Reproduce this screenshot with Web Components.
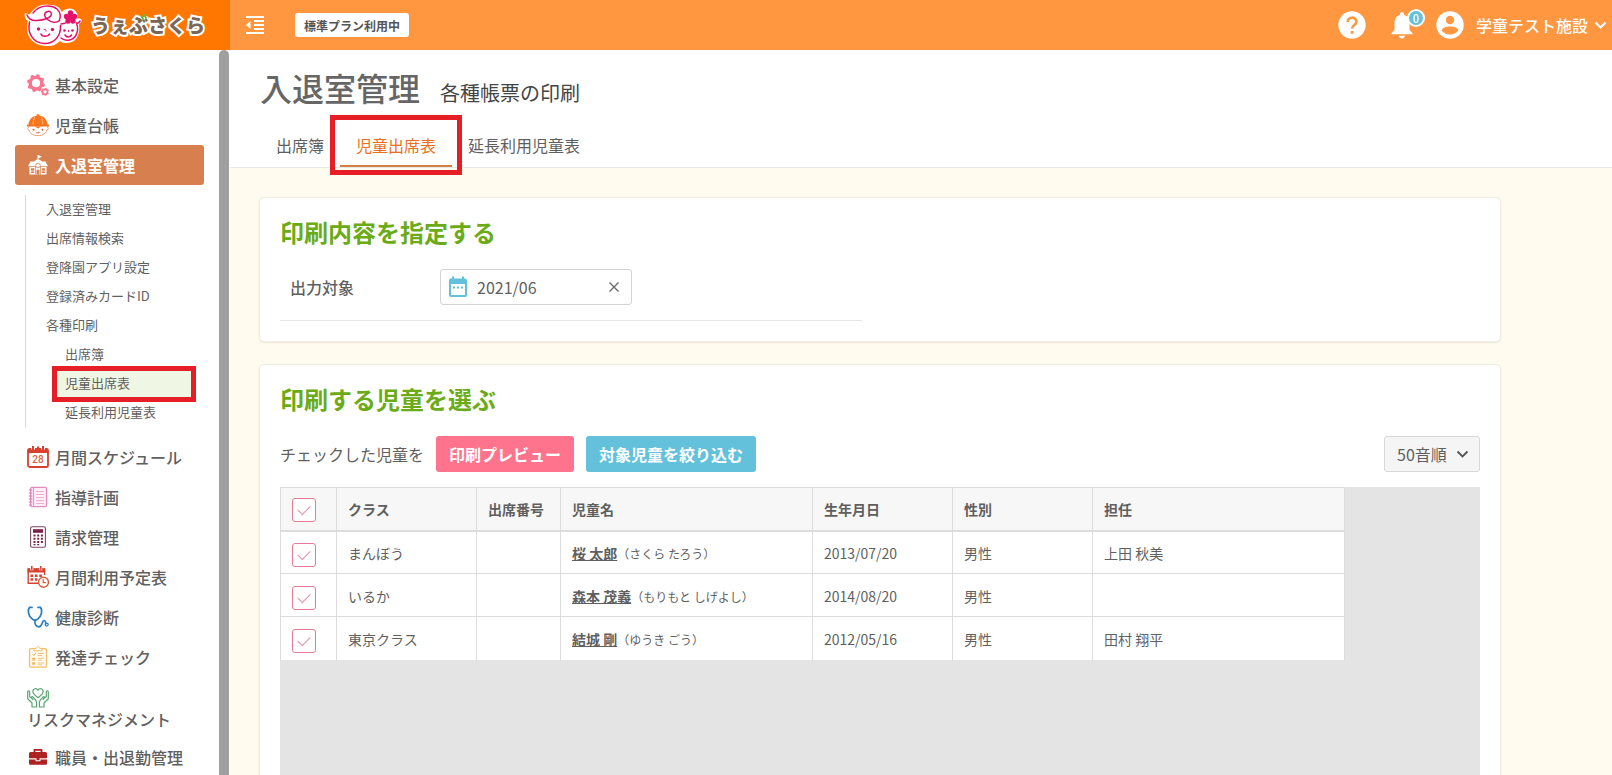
<!DOCTYPE html>
<html lang="ja">
<head>
<meta charset="utf-8">
<title>入退室管理 | うぇぶさくら</title>
<style>
  html, body { margin: 0; height: 100%; }
  body { font: 16px/24px "Noto Sans CJK JP", "Noto Sans", sans-serif; color: #5f5f5f; background: #fffbee; overflow: hidden; }
</style>
</head>
<body>
<app-shell>
  <app-header slot="header" plan="標準プラン利用中" facility="学童テスト施設" notices="0"></app-header>
  <side-menu slot="side">
    <menu-item icon="gears">基本設定</menu-item>
    <menu-item icon="child">児童台帳</menu-item>
    <menu-item icon="school" active>入退室管理</menu-item>
    <sub-menu>
      <sub-item>入退室管理</sub-item>
      <sub-item>出席情報検索</sub-item>
      <sub-item>登降園アプリ設定</sub-item>
      <sub-item>登録済みカードID</sub-item>
      <sub-item>各種印刷</sub-item>
      <sub-item nested>出席簿</sub-item>
      <sub-item nested active>児童出席表</sub-item>
      <sub-item nested>延長利用児童表</sub-item>
    </sub-menu>
    <menu-item icon="calendar">月間スケジュール</menu-item>
    <menu-item icon="notebook">指導計画</menu-item>
    <menu-item icon="calculator">請求管理</menu-item>
    <menu-item icon="calclock">月間利用予定表</menu-item>
    <menu-item icon="stethoscope">健康診断</menu-item>
    <menu-item icon="clipboard">発達チェック</menu-item>
    <menu-item icon="hands" stacked>リスクマネジメント</menu-item>
    <menu-item icon="briefcase">職員・出退勤管理</menu-item>
  </side-menu>
  <page-heading heading="入退室管理" sub="各種帳票の印刷">
    <tab-link>出席簿</tab-link>
    <tab-link active>児童出席表</tab-link>
    <tab-link>延長利用児童表</tab-link>
  </page-heading>
  <page-card heading="印刷内容を指定する">
    <month-field label="出力対象" value="2021/06"></month-field>
  </page-card>
  <page-card heading="印刷する児童を選ぶ">
    <print-toolbar></print-toolbar>
    <roster-table></roster-table>
  </page-card>
</app-shell>

<script>
const define = (name, render) => customElements.define(name, class extends HTMLElement {
  constructor() { super(); this.attachShadow({ mode: 'open' }); }
  connectedCallback() {
    this.shadowRoot.innerHTML = '<style>*{box-sizing:border-box}a{color:inherit;text-decoration:none}</style>' + render(this);
  }
});

const gear = (cx, cy, r, w, teeth, tooth) => {
  let out = `<circle cx="${cx}" cy="${cy}" r="${r}" fill="none" stroke="#fb7590" stroke-width="${w}"/>`;
  for (let i = 0; i < teeth; i++)
    out += `<circle cx="${cx}" cy="${cy - r - w * .4}" r="${tooth}" fill="#fb7590" transform="rotate(${i * 360 / teeth + 15} ${cx} ${cy})"/>`;
  return out;
};

const ICONS = {
  gears: gear(9, 9.2, 5.8, 3.4, 8, 1.9) + gear(18, 17.8, 2.5, 1.700, 7, .9),
  child: `<path d="M1.400 11.500C1.400 5.600 5.600 1.600 11 1.600s9.600 4 9.600 9.900z" fill="#f9771c"/><path d="M11 .2v2" stroke="#f9771c" stroke-width="2.400"/><path d="M7.800 2.800C6.500 5.500 6.200 8 6.200 10.600M14.200 2.800c1.300 2.700 1.600 5.200 1.600 7.800" stroke="#fcb98a" fill="none"/><path d="M2.200 12.800c-1.800 0-2 3 0 3.400.8 3.300 4.300 5.400 8.800 5.400s8-2.100 8.800-5.400c2-.4 1.800-3.400 0-3.400" fill="#fff" stroke="#e99360" stroke-width=".9"/><path d="M0 10.600h22v1.900H0z" fill="#f0731a"/><path d="M8 12.400h6L11 14.600z" fill="#f0731a"/><circle cx="6.500" cy="15.700" r="1" fill="#c96a35"/><circle cx="15.500" cy="15.700" r="1" fill="#c96a35"/><path d="M8.300 18.300c1.400 1.500 4 1.500 5.400 0z" fill="#e0662a"/>`,
  school: `<g fill="#fff"><path d="M10.500 1h1v5h-1zM11.500 1.200l3.500 1.500-3.500 1.500zM11 4.800l5 3.200H6zM3.500 7.500h15l2.500 4.700H1z"/><path d="M2.500 13h17v7.500h-17z"/></g><path d="M4 14.300h3.300v4.700H4zM14.800 14.300H18v4.700h-3.200zM9.500 15.800h3v4.700h-3zM8 12.500h.7v8H8zM13.300 12.500h.7v8h-.7z" fill="#d87f4f"/><path d="M4 17h3.300M14.800 17H18" stroke="#fff" stroke-width=".8"/><circle cx="11" cy="11.500" r="2.300" fill="#fff" stroke="#d87f4f" stroke-width=".8"/>`,
  calendar: `<rect x="1" y="3" width="20" height="18" rx="1.800" fill="#fff" stroke="#d9412f" stroke-width="1.800"/><path d="M1 2.600h20V7H1z" fill="#d9412f"/><path d="M6 0v3.600M16 0v3.600" stroke="#fff" stroke-width="4"/><path d="M6 0v4M11 .5v2M16 0v4" stroke="#d9412f" stroke-width="2"/><text x="11" y="17.400" font-size="10" font-weight="500" text-anchor="middle" fill="#d9603f" font-family="Roboto, sans-serif">28</text>`,
  notebook: `<rect x="3.600" y="1.300" width="16" height="19.400" rx="1.500" fill="#fdeef7" stroke="#e58cbe" stroke-width="1.300"/><path d="M6.600 1.500v19" stroke="#e58cbe"/><path d="M1.800 4h3.500M1.800 7h3.500M1.800 10h3.500M1.800 13h3.500M1.800 16h3.500M1.800 19h3" stroke="#dd74b0" stroke-width="1.200"/><path d="M9 5.500h8M9 8.500h8M9 11.500h8M9 14.500h8M9 17.500h8" stroke="#e9a9cf" stroke-width=".9"/>`,
  calculator: `<rect x="3.600" y=".8" width="14.800" height="20.400" rx="1.500" fill="#fff" stroke="#7b4a63" stroke-width="1.100"/><path d="M6 3.200h10v3.600H6z" fill="#7a2048"/><path d="M6.500 9.600h9.500M6.500 12.800h9.500M6.500 16h9.500" stroke="#7a2048" stroke-width="2" stroke-dasharray="2 1.700"/><path d="M6.500 18.600h5.800" stroke="#7a2048" stroke-width="1.300" stroke-dasharray="2 1.700"/>`,
  calclock: `<path d="M12 17.300H1.200V3H17.500v6" fill="none" stroke="#d9412f" stroke-width="1.400"/><path d="M.5 2.500h17.700v4H.5z" fill="#d9412f"/><path d="M4.800 0v4.200M13.700 0v4.200" stroke="#fff" stroke-width="3"/><path d="M4.800 0v3.800M13.700 0v3.800" stroke="#d9412f" stroke-width="1.600"/><path d="M3.500 9.800H15.500M3.500 13.500h7.500" stroke="#d9412f" stroke-width="2.600" stroke-dasharray="2.600 1.800"/><circle cx="16.500" cy="16.300" r="5" fill="#fff" stroke="#d9603f" stroke-width="1.500"/><path d="M16.200 13v3.600h3" stroke="#d9603f" fill="none" stroke-width="1.200"/>`,
  stethoscope: `<g fill="none" stroke="#2a7fc0" stroke-width="1.700" stroke-linecap="round"><path d="M5 1.400H2.600C.3 4 1.200 10.500 5.500 13.300c1.600 1 3.400 1 5 0C14.800 10.500 15.700 4 13.400 1.400H11"/><path d="M8 14.300c-.5 3.500.8 6.500 3.700 6.500 4.300 0 2.700-6.300 5.600-6.300 1.700 0 1 2.300 1.600 3.200"/><circle cx="19.700" cy="18.600" r="1.500" stroke-width="1.300"/></g>`,
  clipboard: `<rect x="2.500" y="2.600" width="17" height="18.600" rx="1.300" fill="#fffaf0" stroke="#f0c06c" stroke-width="1.300"/><path d="M7 4.700V2.300h2.300c.5-2.200 3-2.200 3.400 0H15v2.400z" fill="#fff" stroke="#f0c06c"/><path d="M5.500 8.200l1.300 1.300 2-2.700" fill="none" stroke="#e9ae4e"/><path d="M10.800 7.500H17M10.800 9.500H15M10.800 12.300H17M10.800 14.200H15M10.800 17H17M10.800 18.800H15" stroke="#ecbd74" stroke-width=".9"/><path d="M5.200 11.800h3v2.600h-3zM5.200 16.200h3v2.600h-3z" fill="#f0b957"/>`,
  hands: `<g fill="none" stroke="#59a273" stroke-width="1.200" stroke-linejoin="round" transform="translate(0 1)"><path d="M11 10.700C7.600 8.300 5.800 6.400 5.800 4.300c0-2.900 3.800-3.600 5.200-1 1.400-2.600 5.200-1.900 5.200 1 0 2.100-1.800 4-5.200 6.400z"/><path d="M.7 4.200v7.600L5 16v4h4.600v-4.500c0-2-1.200-3.300-3.700-5.500-1-.8-2 .2-1.200 1.200l1.500 1.800M.7 4.200c1.200-.8 2 0 2 1v4.600l2 1.400M21.300 4.200v7.600L17 16v4h-4.600v-4.500c0-2 1.200-3.300 3.700-5.500 1-.8 2 .2 1.200 1.200l-1.500 1.800M21.300 4.200c-1.200-.8-2 0-2 1v4.600l-2 1.400"/></g>`,
  briefcase: `<path d="M7.500 6V3.800h7V6" fill="none" stroke="#ad2222" stroke-width="1.800"/><path d="M3.500 6h15a1.500 1.500 0 0 1 1.500 1.500v4.700H2V7.500A1.500 1.500 0 0 1 3.500 6zM2 13.500h6.500v1.800h5v-1.800H20v4a1.200 1.200 0 0 1-1.200 1.200H3.200A1.200 1.200 0 0 1 2 17.500zM9.500 12h3v2.300h-3z" fill="#ad2222"/>`
};

define('app-icon', el => `
  <style>:host{display:block;width:22px;height:22px;flex:none}svg{display:block;width:100%;height:100%;overflow:visible}</style>
  <svg viewBox="0 0 22 22" aria-hidden="true">${ICONS[el.getAttribute('name')]}</svg>`);

define('app-shell', () => `
  <style>
    :host{display:grid;grid-template:50px minmax(0,1fr) / 230px minmax(0,1fr);height:100vh}
    slot[name=header]{display:block;grid-column:1/-1}
    main{overflow-y:auto;scrollbar-width:none;display:flex;flex-direction:column;gap:22px}
    ::slotted(page-card){margin:0 29px;max-width:1242px}
  </style>
  <slot name="header"></slot><slot name="side"></slot><main><slot></slot></main>`);

define('brand-logo', () => `
  <style>
    :host{display:block;width:230px}
    a{display:flex;align-items:center;height:50px;padding-left:24px;gap:9px}
    svg{display:block;flex:none}
    .name{position:relative;font-size:19px;font-weight:900;line-height:28px;color:#7a6757;-webkit-text-stroke:4px #fff;paint-order:stroke fill}
    .name svg{position:absolute;left:49px;top:3px}
  </style>
  <a href="#" aria-label="うぇぶさくら">
    <svg width="58" height="42" viewBox="0 0 58 42">
      <path d="M1 9c2 0 3 2 5 1C11 2 19-1 27 1c6 0 9 3 11 7 3-4 11-5 14 0 2 2 2 5 1 7 3-1 4 0 5 1-1 3-2 3-3 4 1 9-1 18-12 19-3 0-5 0-7-2-4 4-9 6-15 5C10 41 3 34 3 24c0-3 0-5 1-7C1 15 0 12 1 9z" fill="#fff"/>
      <g fill="none" stroke="#e5106a" stroke-width="1.500" stroke-linecap="round" stroke-linejoin="round">
        <path d="M3 11c2 5 6 6 10 5.500 6-.5 12-2 14-5 1.500-2.500-1-5-4-3.800-3.500 1.600-3 5.200.5 7.800 4 3 9 4 12 1"/>
        <path d="M9 9C15 1 27 0 33 5c3.500 3 4 8 2.500 11"/>
        <path d="M5.500 18C3 29 9 39 20 39.500c10 .5 17-7 16.500-18"/>
        <path d="M37 34c4 3.500 11 3 14.500-2 2.500-4 2.500-9 1-13M37 20c3-.3 6-1.500 8-3M52.500 19c1.500.5 3-.5 3.500-2"/>
        <path d="M17 30c1 3 7 3 8.500 0M41 31c1.500 2.500 5 2.500 6.500 0"/>
        <path d="M20 25.500c1.500-.5 2 0 2 1.500M44.500 26.500v1" stroke-width="1"/>
      </g>
      <g fill="#e5106a"><circle cx="14.500" cy="25" r="1.700"/><circle cx="28.500" cy="25.500" r="1.700"/><circle cx="40.500" cy="26.500" r="1.300"/><circle cx="48.500" cy="26.500" r="1.300"/>
        <circle cx="46.500" cy="9" r="2.700"/><circle cx="50.500" cy="12.500" r="2.700"/><circle cx="49" cy="17" r="2.700"/><circle cx="44" cy="17" r="2.700"/><circle cx="42.500" cy="12.500" r="2.700"/><circle cx="46.500" cy="13.500" r="3"/></g>
    </svg>
    <span class="name">うぇぶさくら<svg width="7" height="7" viewBox="0 0 7 7"><path d="M1.500 2l1.500 3M4.500 1L6 4" stroke="#6cb52d" stroke-width="1.800" stroke-linecap="round"/></svg></span>
  </a>`);

define('app-header', el => `
  <style>
    :host{display:flex;align-items:center;height:50px;background:#ff9640;color:#fff}
    brand-logo{background:#ff7600;height:50px}
    button{border:0;padding:0;background:none;color:inherit;font:inherit;display:flex;align-items:center;cursor:pointer}
    svg{display:block}
    .fold{margin-left:16px}
    .plan{margin-left:31px;padding:1px 9px 0;border-radius:3px;background:#fff;color:#555;font-size:12px;font-weight:700;line-height:23px}
    .right{margin-left:auto;display:flex;align-items:center;padding-right:5px}
    .bell{position:relative;margin-left:23px}
    .count{position:absolute;left:18px;top:-2px;width:18px;height:18px;border-radius:9px;border:2px solid #fff;background:#64c1dc;font-size:11px;font-weight:500;line-height:14px;text-align:center}
    .user{margin-left:19px;font-weight:500}
    .user span{margin:0 6px 0 12px}
  </style>
  <brand-logo></brand-logo>
  <button class="fold" aria-label="メニューを閉じる"><svg width="18" height="18" viewBox="0 0 18 18" fill="#fff"><path d="M0 0h18v2H0zM8 4h10v2H8zM8 8h10v2H8zM8 12h10v2H8zM0 16h18v2H0zM0 9l4.500-4v8z"/></svg></button>
  <span class="plan">${el.getAttribute('plan')}</span>
  <div class="right">
    <button aria-label="ヘルプ"><svg width="28" height="28" viewBox="0 0 28 28"><circle cx="14" cy="14" r="13.700" fill="#fff"/><path d="M9.700 11c0-5.800 8.800-5.600 8.800-.4 0 3.400-4.400 3.600-4.400 7" fill="none" stroke="#ff9640" stroke-width="2.600"/><path d="M12.700 20h2.800v2.800h-2.800z" fill="#ff9640"/></svg></button>
    <button class="bell" aria-label="お知らせ"><svg width="26" height="28" viewBox="0 0 26 28" fill="#fff"><path d="M13 27.500c1.600 0 2.900-1.300 2.900-2.700h-5.800c0 1.400 1.300 2.700 2.900 2.700zM20.500 19v-6.800c0-4.200-2-7.300-5.500-8.100v-1a2 2 0 0 0-4 0v1c-3.500.8-5.500 3.900-5.500 8.100V19L2.500 22v1.300h21V22z"/></svg><span class="count">${el.getAttribute('notices')}</span></button>
    <button class="user"><svg width="30" height="28" viewBox="0 0 30 28"><circle cx="16" cy="14" r="13.700" fill="#fff"/><circle cx="16" cy="9" r="4.200" fill="#ff9640"/><path d="M7.800 19.500c.2-5.400 16.200-5.400 16.400 0-3.600 5.400-12.800 5.400-16.400 0z" fill="#ff9640"/></svg>
    <span>${el.getAttribute('facility')}</span><svg width="13" height="9" viewBox="0 0 13 9"><path d="M1.500 1.500l5 5 5-5" fill="none" stroke="#fff" stroke-width="2.200"/></svg></button>
  </div>`);

define('side-menu', () => `
  <style>
    :host{display:flex;height:100%;background:#fff;overflow:hidden}
    nav{flex:1;padding:15px 15px 0;overflow:hidden}
    .thumb{width:10px;margin-right:1px;border-radius:5px 5px 0 0;background:#a0a0a0}
  </style>
  <nav><slot></slot></nav><div class="thumb"></div>`);

define('menu-item', el => `
  <style>
    :host{display:block}
    a{display:flex;align-items:center;gap:6px;height:40px;padding-left:12px;font-weight:500;white-space:nowrap;border-radius:3px}
    :host([active]) a{background:#d87f4f;color:#fff;font-weight:700}
    :host([stacked]) a{flex-direction:column;align-items:flex-start;justify-content:flex-start;gap:0;height:60px;padding-top:9px;line-height:22px}
  </style>
  <a href="#"><app-icon name="${el.getAttribute('icon')}"></app-icon><span><slot></slot></span></a>`);

define('sub-menu', () => `
  <style>:host{display:block;margin:10px 0 10px 10px;border-left:1px solid #d8d8d8}</style><slot></slot>`);

define('sub-item', () => `
  <style>
    :host{display:block;position:relative;margin-left:20px;font-size:13px}
    a{display:block;padding-bottom:2px;line-height:27px;white-space:nowrap}
    :host([nested]){margin:0 13px 0 31px}
    :host([nested]) a{padding-left:8px}
    :host([active]) a{background:#eff6e4}
    :host([active])::after{content:"";position:absolute;inset:-3px -5px -4px;border:5px solid #e61e25;pointer-events:none}
  </style>
  <a href="#"><slot></slot></a>`);

define('page-heading', el => `
  <style>
    :host{display:block;flex:none;background:#fff;border-bottom:1px solid #e8e8e8;padding:13px 30px 0;margin-bottom:7px}
    header{display:flex;align-items:baseline;gap:20px}
    h1{margin:0;font-size:32px;font-weight:500;line-height:48px;color:#666}
    p{margin:0;font-size:20px;color:#444}
    nav{display:flex;margin-top:13px}
  </style>
  <header><h1>${el.getAttribute('heading')}</h1><p>${el.getAttribute('sub')}</p></header>
  <nav><slot></slot></nav>`);

define('tab-link', () => `
  <style>
    :host{display:block;position:relative}
    a{display:block;padding:9px 16px 8px;line-height:24px;border-bottom:2px solid transparent}
    :host([active]) a{color:#ea6f1c;border-color:#cf8042}
    :host([active])::after{content:"";position:absolute;inset:-9px -10px -8px;border:5px solid #e61e25;pointer-events:none}
  </style>
  <a href="#"><slot></slot></a>`);

define('page-card', el => `
  <style>
    :host{display:block;flex:none;box-sizing:border-box;padding:16px 20px 20px;background:#fff;border:1px solid #efece4;border-radius:5px;box-shadow:0 1px 2px rgba(0,0,0,.08)}
    h2{margin:0;font-size:24px;line-height:36px;color:#6aab17}
  </style>
  <h2>${el.getAttribute('heading')}</h2><slot></slot>`);

define('month-field', el => `
  <style>
    :host{display:flex;box-sizing:border-box;align-items:center;margin-top:19px;padding:0 10px 15px;border-bottom:1px solid #e6e6e6;width:calc(50% - 18px);min-width:400px}
    label{width:150px;font-weight:500}
    .box{display:flex;align-items:center;width:192px;height:36px;padding:0 9px 0 7px;border:1px solid #d4d4d4;border-radius:3px}
    svg{display:block;flex:none}
    input{flex:1;min-width:0;border:0;outline:0;padding:0 0 0 9px;font:inherit;color:inherit;background:none}
    button{border:0;background:none;padding:0;width:16px;height:16px}
  </style>
  <label for="month">${el.getAttribute('label')}</label>
  <div class="box">
    <svg width="20" height="22" viewBox="0 0 20 22"><path d="M2.800 2.500H4V.5h2v2h8v-2h2v2h1.200A1.800 1.800 0 0 1 19 4.300v14.900A1.800 1.800 0 0 1 17.200 21H2.800A1.800 1.800 0 0 1 1 19.200V4.300a1.800 1.800 0 0 1 1.800-1.800zM3 8v11h14V8z" fill="#64c1dc" fill-rule="evenodd"/><path d="M5 10.500h2v2H5zM9 10.500h2v2H9zM13 10.500h2v2h-2z" fill="#64c1dc"/></svg>
    <input id="month" type="text" value="${el.getAttribute('value')}">
    <button aria-label="クリア"><svg width="16" height="16" viewBox="0 0 16 16"><path d="M3.500 3.500l9 9M12.500 3.500l-9 9" stroke="#666" stroke-width="1.300"/></svg></button>
  </div>`);

define('print-toolbar', () => `
  <style>
    :host{display:flex;align-items:center;gap:12px;margin:19px 0 15px}
    button{height:36px;padding:0 13px;border:0;border-radius:3px;color:#fff;font:inherit;font-weight:700}
    .preview{background:#ff738c}
    .filter{background:#64c1dc}
    .order{display:grid;align-items:center;margin-left:auto}
    select,.order svg{grid-area:1/1}
    select{appearance:none;width:96px;height:36px;margin:0;padding:0 12px;border:1px solid #d8d8d8;border-radius:3px;background:#f5f5f5;color:inherit;font:inherit}
    svg{justify-self:end;margin-right:11px;pointer-events:none}
  </style>
  <span>チェックした児童を</span>
  <button class="preview">印刷プレビュー</button>
  <button class="filter">対象児童を絞り込む</button>
  <div class="order"><select aria-label="並び順"><option>50音順</option></select>
  <svg width="13" height="9" viewBox="0 0 13 9"><path d="M1.500 1.500l5 5 5-5" fill="none" stroke="#555" stroke-width="1.800"/></svg></div>`);

const ROWS = [
  ['まんぼう', '', '桜 太郎', 'さくら たろう', '2013/07/20', '男性', '上田 秋美'],
  ['いるか', '', '森本 茂義', 'もりもと しげよし', '2014/08/20', '男性', ''],
  ['東京クラス', '', '結城 剛', 'ゆうき ごう', '2012/05/16', '男性', '田村 翔平']
];

define('roster-table', () => `
  <style>
    :host{display:block;min-height:440px;background:#e4e4e4}
    table{border-collapse:collapse;table-layout:fixed;width:1065px;background:#fff;font-size:14px;line-height:20px}
    th,td{height:43px;padding:0 11px;border:1px solid #dcdcdc;text-align:left;white-space:nowrap}
    td{padding-top:2px}
    th{background:#f7f7f7;border-bottom-width:2px}
    tbody tr:last-child td{border-bottom:0}
    .check{width:56px}.m{width:140px}.s{width:84px}.l{width:252px}
    td a{font-weight:700;text-decoration:underline}
    small{font-size:12px}
    input{appearance:none;display:grid;place-items:center;width:24px;height:24px;margin:3px 0 0;border:1px solid #e57c97;border-radius:3px;background:#fff}
    input:checked::before{content:"";width:11px;height:6px;margin-top:-3px;border:solid #e990a6;border-width:0 0 1px 1px;transform:rotate(-45deg)}
  </style>
  <table>
    <colgroup><col class="check"><col class="m"><col class="s"><col class="l"><col class="m"><col class="m"><col class="l"></colgroup>
    <thead><tr><th><input type="checkbox" checked aria-label="すべて選択"></th><th>クラス</th><th>出席番号</th><th>児童名</th><th>生年月日</th><th>性別</th><th>担任</th></tr></thead>
    <tbody>${ROWS.map(r => `<tr><td><input type="checkbox" checked aria-label="${r[2]}"></td><td>${r[0]}</td><td>${r[1]}</td><td><a href="#">${r[2]}</a><small>（${r[3]}）</small></td><td>${r[4]}</td><td>${r[5]}</td><td>${r[6]}</td></tr>`).join('')}</tbody>
  </table>`);
</script>
</body>
</html>
